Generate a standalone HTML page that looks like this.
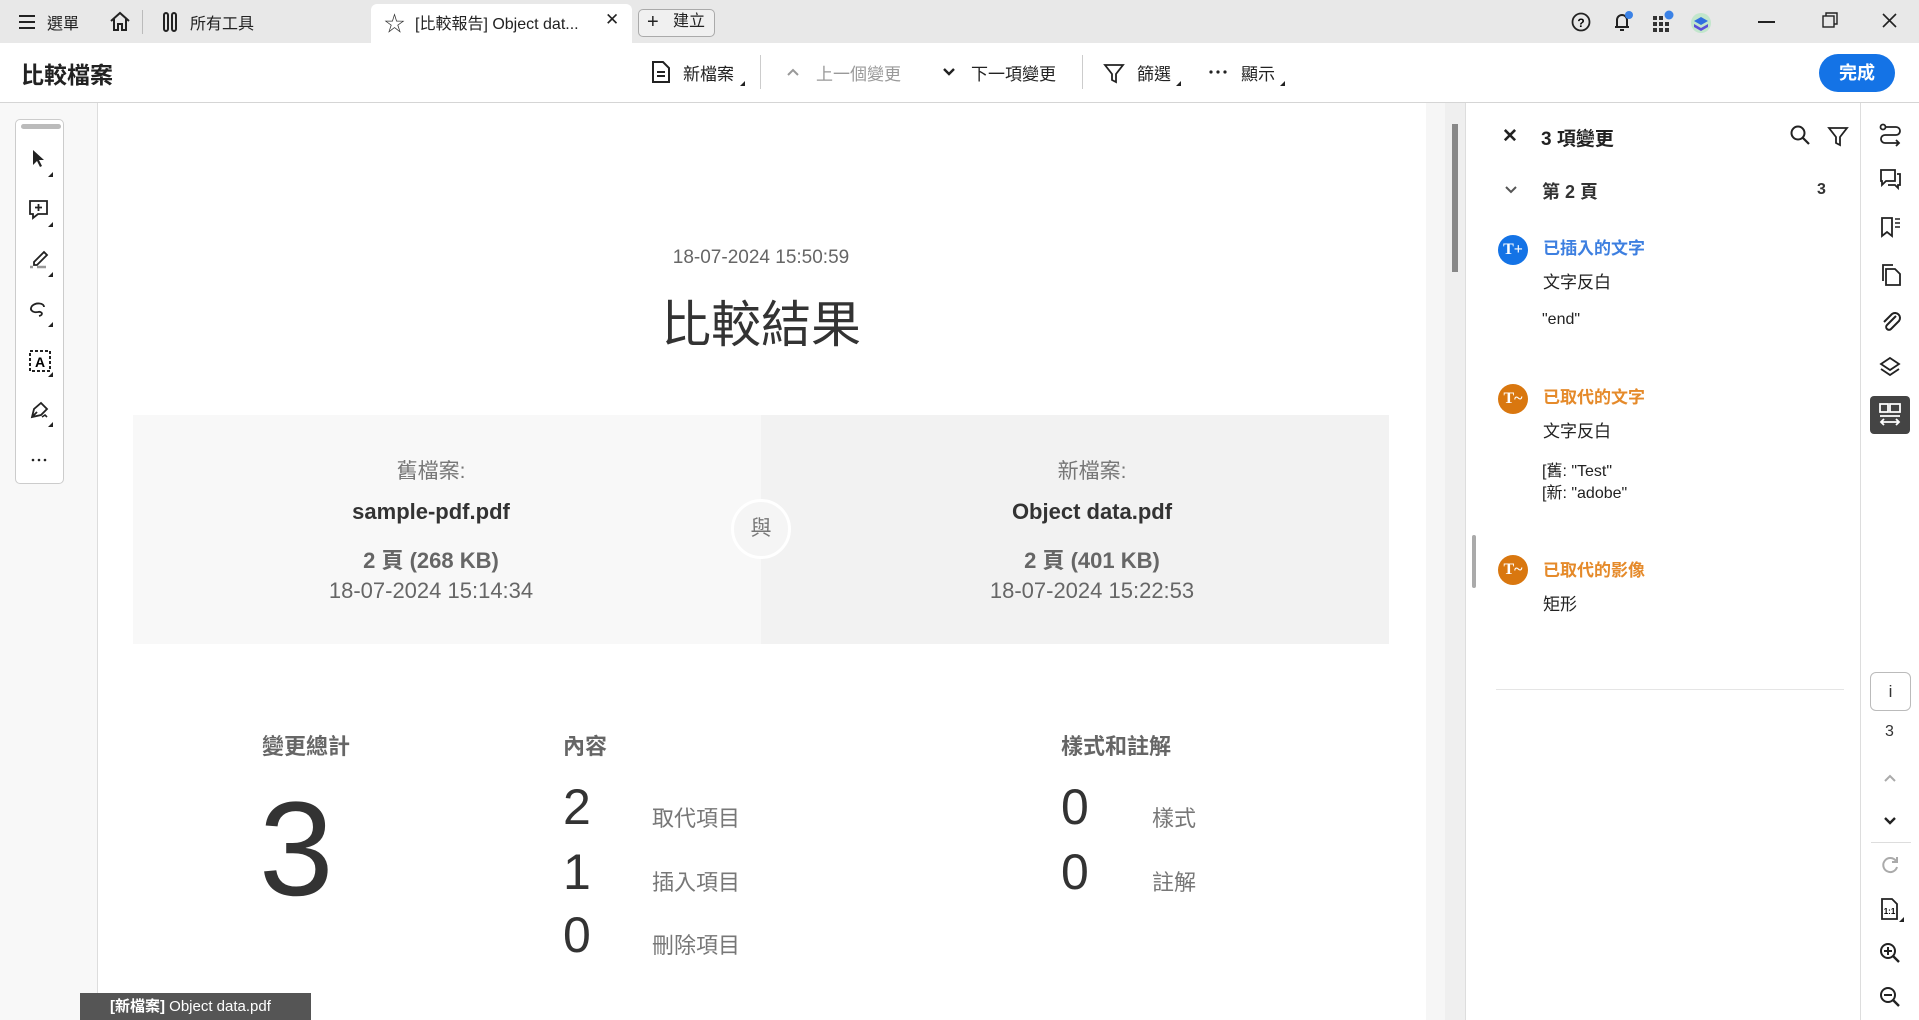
<!DOCTYPE html>
<html><head><meta charset="utf-8"><style>
*{margin:0;padding:0;box-sizing:border-box}
body{width:1919px;height:1020px;overflow:hidden;position:relative;background:#fff;font-family:"Liberation Sans","Noto Sans CJK TC",sans-serif;color:#222}
.a{position:absolute;white-space:nowrap}
svg{position:absolute;overflow:visible}
.c{transform:translateX(-50%);text-align:center}
</style></head><body>
<!-- top bar -->
<div class="a" style="left:0;top:0;width:1919px;height:43px;background:#e8e8e8"></div>
<svg style="left:19px;top:15px" width="16" height="14"><path d="M0 1H16M0 7H16M0 13H16" stroke="#222" stroke-width="2"/></svg>
<div class="a" style="left:47px;top:10px;font-size:16px">選單</div>
<svg style="left:109px;top:11px" width="22" height="20"><path d="M2 10L11 2L20 10M5 8V19H9V13H13V19H17V8" stroke="#222" stroke-width="2" fill="none"/></svg>
<div class="a" style="left:142px;top:10px;width:1px;height:24px;background:#bbb"></div>
<svg style="left:163px;top:12px" width="14" height="20"><rect x="1" y="1" width="4" height="18" rx="2" stroke="#222" stroke-width="2" fill="none"/><rect x="9" y="1" width="4" height="18" rx="2" stroke="#222" stroke-width="2" fill="none"/></svg>
<div class="a" style="left:190px;top:10px;font-size:16px">所有工具</div>
<div class="a" style="left:371px;top:4px;width:261px;height:40px;background:#fff;border-radius:6px 6px 0 0"></div>
<div class="a" style="left:384px;top:8px;font-size:21px;color:#333">☆</div>
<div class="a" style="left:415px;top:10px;font-size:16px">[比較報告] Object dat...</div>
<div class="a" style="left:605px;top:10px;font-size:17px">✕</div>
<div class="a" style="left:638px;top:9px;width:77px;height:28px;border:1px solid #aaa;border-radius:5px;background:#f0f0f0"></div>
<div class="a" style="left:647px;top:10px;font-size:20px;line-height:24px">+</div>
<div class="a" style="left:673px;top:12px;font-size:16px;line-height:20px">建立</div>
<svg style="left:1571px;top:12px" width="20" height="20"><circle cx="10" cy="10" r="8.5" stroke="#222" stroke-width="1.8" fill="none"/><text x="10" y="15" font-size="12" font-weight="bold" text-anchor="middle" font-family="Liberation Sans">?</text></svg>
<svg style="left:1611px;top:10px" width="24" height="24"><path d="M4 17H18M6 17V10A5 5 0 0 1 16 10V17M9 20H13" stroke="#222" stroke-width="2" fill="none"/><circle cx="18" cy="5" r="4" fill="#3b82e6"/></svg>
<svg style="left:1651px;top:10px" width="24" height="24"><g fill="#333"><rect x="2" y="6" width="4" height="4"/><rect x="8" y="6" width="4" height="4"/><rect x="2" y="12" width="4" height="4"/><rect x="8" y="12" width="4" height="4"/><rect x="14" y="12" width="4" height="4"/><rect x="2" y="18" width="4" height="4"/><rect x="8" y="18" width="4" height="4"/><rect x="14" y="18" width="4" height="4"/></g><circle cx="18" cy="5" r="4.5" fill="#3b82e6"/></svg>
<svg style="left:1690px;top:12px" width="22" height="22"><circle cx="11" cy="11" r="10" fill="#9be3b0" opacity=".5"/><path d="M4 9L11 5L18 9L11 13Z" fill="#2f6fe0"/><path d="M4 12L11 16L18 12V15L11 19L4 15Z" fill="#5a4fd8"/></svg>
<div class="a" style="left:1758px;top:21px;width:17px;height:2px;background:#222"></div>
<svg style="left:1822px;top:12px" width="16" height="16"><rect x="1" y="4" width="11" height="11" stroke="#222" stroke-width="1.4" fill="none"/><path d="M4 4V1H15V12H12" stroke="#222" stroke-width="1.4" fill="none"/></svg>
<svg style="left:1882px;top:13px" width="15" height="15"><path d="M1 1L14 14M14 1L1 14" stroke="#222" stroke-width="1.6"/></svg>
<!-- toolbar -->
<div class="a" style="left:0;top:102px;width:1919px;height:1px;background:#d5d5d5"></div>
<div class="a" style="left:21px;top:56px;font-size:23px;font-weight:bold">比較檔案</div>
<svg style="left:652px;top:61px" width="18" height="22"><path d="M1 1H11L17 7V21H1Z" stroke="#222" stroke-width="2" fill="none"/><path d="M5 11H13M5 15H13" stroke="#222" stroke-width="2"/></svg>
<div class="a" style="left:683px;top:60px;font-size:17px">新檔案</div>
<svg style="left:740px;top:81px" width="5" height="5"><path d="M5 0V5H0Z" fill="#222"/></svg>
<div class="a" style="left:760px;top:55px;width:1px;height:34px;background:#ccc"></div>
<svg style="left:787px;top:68px" width="12" height="8"><path d="M1 7L6 2L11 7" stroke="#999" stroke-width="2" fill="none"/></svg>
<div class="a" style="left:816px;top:60px;font-size:17px;color:#999">上一個變更</div>
<svg style="left:943px;top:68px" width="12" height="8"><path d="M1 1L6 6L11 1" stroke="#222" stroke-width="2.4" fill="none"/></svg>
<div class="a" style="left:971px;top:60px;font-size:17px">下一項變更</div>
<div class="a" style="left:1082px;top:55px;width:1px;height:34px;background:#ccc"></div>
<svg style="left:1104px;top:64px" width="20" height="19"><path d="M1 1H19L12 10V18L8 16V10Z" stroke="#222" stroke-width="1.8" fill="none"/></svg>
<div class="a" style="left:1137px;top:60px;font-size:17px">篩選</div>
<svg style="left:1176px;top:81px" width="5" height="5"><path d="M5 0V5H0Z" fill="#222"/></svg>
<svg style="left:1209px;top:70px" width="20" height="4"><g fill="#222"><circle cx="2" cy="2" r="1.6"/><circle cx="9" cy="2" r="1.6"/><circle cx="16" cy="2" r="1.6"/></g></svg>
<div class="a" style="left:1241px;top:60px;font-size:17px">顯示</div>
<svg style="left:1280px;top:81px" width="5" height="5"><path d="M5 0V5H0Z" fill="#222"/></svg>
<div class="a" style="left:1819px;top:54px;width:76px;height:38px;background:#1473e6;border-radius:19px;color:#fff;font-size:18px;font-weight:bold;text-align:center;line-height:38px">完成</div>
<!-- left gutter -->
<div class="a" style="left:0;top:103px;width:98px;height:917px;background:#f8f8f8;border-right:1px solid #ddd"></div>
<div class="a" style="left:15px;top:119px;width:49px;height:365px;background:#fff;border:1px solid #ccc;border-radius:5px"></div>
<div class="a" style="left:21px;top:124px;width:40px;height:5px;background:#bbb;border-radius:3px"></div>
<svg style="left:30px;top:149px" width="20" height="20"><path d="M3 1L3 16L7 12L10 18L12 17L9 11H14Z" fill="#222"/></svg>
<svg style="left:28px;top:199px" width="26" height="24"><path d="M2 2H19V15H10L5 19V15H2Z" stroke="#222" stroke-width="1.8" fill="none"/><path d="M10.5 5V12M7 8.5H14" stroke="#222" stroke-width="1.8"/></svg>
<svg style="left:28px;top:248px" width="26" height="24"><path d="M6 14L16 4L19 7L9 17H6Z" stroke="#222" stroke-width="1.8" fill="none"/><path d="M2 19H5M9 19H18" stroke="#999" stroke-width="2.4"/></svg>
<svg style="left:28px;top:299px" width="26" height="24"><path d="M16 8C16 4 8 3 4 7C1 11 5 14 10 13C14 12 16 16 11 17" stroke="#222" stroke-width="1.8" fill="none"/></svg>
<svg style="left:28px;top:349px" width="26" height="24"><rect x="2" y="2" width="20" height="20" stroke="#222" stroke-width="2" stroke-dasharray="3 2" fill="none"/><text x="12" y="18" font-size="14" font-weight="bold" text-anchor="middle" font-family="Liberation Sans">A</text></svg>
<svg style="left:28px;top:399px" width="26" height="24"><path d="M4 18L6 10L13 4L19 10L13 16Z M4 18L9 13" stroke="#222" stroke-width="1.8" fill="none"/><path d="M14 18L17 16L19 18" stroke="#222" stroke-width="1.6" fill="none"/></svg>
<svg style="left:31px;top:458px" width="16" height="4"><g fill="#222"><circle cx="2" cy="2" r="1.3"/><circle cx="8" cy="2" r="1.3"/><circle cx="14" cy="2" r="1.3"/></g></svg>
<svg style="left:48px;top:172px" width="6" height="300"><g fill="#222"><path d="M5 0V5H0Z"/><path d="M5 50V55H0Z"/><path d="M5 100V105H0Z"/><path d="M5 150V155H0Z"/><path d="M5 200V205H0Z"/><path d="M5 250V255H0Z"/></g></svg>
<!-- page -->
<div class="a" style="left:99px;top:103px;width:1327px;height:917px;background:#fff"></div>
<div class="a" style="left:1426px;top:103px;width:40px;height:917px;background:#f6f6f6"></div>
<div class="a" style="left:1445px;top:103px;width:20px;height:917px;background:#efefef"></div>
<div class="a" style="left:1452px;top:124px;width:6px;height:148px;background:#888"></div>
<div class="a c" style="left:761px;top:247px;font-size:19px;color:#666">18-07-2024 15:50:59</div>
<div class="a c" style="left:761px;top:285px;font-size:50px;color:#333">比較結果</div>
<div class="a" style="left:133px;top:415px;width:628px;height:229px;background:#f8f8f8"></div>
<div class="a" style="left:761px;top:415px;width:628px;height:229px;background:#f2f2f2"></div>
<div class="a" style="left:731px;top:499px;width:60px;height:60px;border-radius:50%;background:#f5f5f5;border:3px solid #fff;font-size:21px;color:#777;text-align:center;line-height:54px">與</div>
<div class="a c" style="left:431px;top:455px;font-size:21px;color:#777">舊檔案:</div>
<div class="a c" style="left:431px;top:499px;font-size:22px;font-weight:bold;color:#333">sample-pdf.pdf</div>
<div class="a c" style="left:431px;top:543px;font-size:22px;font-weight:bold;color:#666">2 頁 (268 KB)</div>
<div class="a c" style="left:431px;top:578px;font-size:22px;color:#666">18-07-2024 15:14:34</div>
<div class="a c" style="left:1092px;top:455px;font-size:21px;color:#777">新檔案:</div>
<div class="a c" style="left:1092px;top:499px;font-size:22px;font-weight:bold;color:#333">Object data.pdf</div>
<div class="a c" style="left:1092px;top:543px;font-size:22px;font-weight:bold;color:#666">2 頁 (401 KB)</div>
<div class="a c" style="left:1092px;top:578px;font-size:22px;color:#666">18-07-2024 15:22:53</div>
<div class="a" style="left:262px;top:729px;font-size:22px;font-weight:bold;color:#666">變更總計</div>
<div class="a" style="left:259px;top:783px;font-size:134px;color:#333;line-height:1">3</div>
<div class="a" style="left:563px;top:729px;font-size:22px;font-weight:bold;color:#666">內容</div>
<div class="a" style="left:563px;top:782px;font-size:50px;color:#333;line-height:1">2</div>
<div class="a" style="left:563px;top:847px;font-size:50px;color:#333;line-height:1">1</div>
<div class="a" style="left:563px;top:910px;font-size:50px;color:#333;line-height:1">0</div>
<div class="a" style="left:652px;top:801px;font-size:22px;color:#777">取代項目</div>
<div class="a" style="left:652px;top:865px;font-size:22px;color:#777">插入項目</div>
<div class="a" style="left:652px;top:928px;font-size:22px;color:#777">刪除項目</div>
<div class="a" style="left:1061px;top:729px;font-size:22px;font-weight:bold;color:#666">樣式和註解</div>
<div class="a" style="left:1061px;top:782px;font-size:50px;color:#333;line-height:1">0</div>
<div class="a" style="left:1061px;top:847px;font-size:50px;color:#333;line-height:1">0</div>
<div class="a" style="left:1152px;top:801px;font-size:22px;color:#777">樣式</div>
<div class="a" style="left:1152px;top:865px;font-size:22px;color:#777">註解</div>
<div class="a" style="left:80px;top:993px;width:231px;height:27px;background:#555;color:#fff;font-size:15px;line-height:27px;padding-left:30px"><b>[新檔案]</b> Object data.pdf</div>
<!-- right panel -->
<div class="a" style="left:1465px;top:103px;width:1px;height:917px;background:#ddd"></div>
<div class="a" style="left:1860px;top:103px;width:1px;height:917px;background:#ddd"></div>
<div class="a" style="left:1502px;top:125px;font-size:19px;font-weight:bold">✕</div>
<div class="a" style="left:1541px;top:124px;font-size:19px;font-weight:bold">3 項變更</div>
<svg style="left:1790px;top:125px" width="20" height="20"><circle cx="8" cy="8" r="6.5" stroke="#222" stroke-width="2" fill="none"/><path d="M13 13L19 19" stroke="#222" stroke-width="2.2"/></svg>
<svg style="left:1828px;top:127px" width="20" height="19"><path d="M1 1H19L12 10V18L8 16V10Z" stroke="#222" stroke-width="1.8" fill="none"/></svg>
<svg style="left:1505px;top:186px" width="12" height="8"><path d="M1 1L6 6L11 1" stroke="#555" stroke-width="2" fill="none"/></svg>
<div class="a" style="left:1542px;top:178px;font-size:18px;font-weight:bold;color:#333">第 2 頁</div>
<div class="a" style="left:1817px;top:181px;font-size:16px;font-weight:bold;color:#333">3</div>
<div class="a" style="left:1498px;top:235px;width:30px;height:30px;border-radius:50%;background:#1473e6;color:#fff;font-size:16px;font-weight:bold;text-align:center;line-height:30px;font-family:'Liberation Serif',serif">T+</div>
<div class="a" style="left:1543px;top:234px;font-size:17px;font-weight:bold;color:#3d7fe0">已插入的文字</div>
<div class="a" style="left:1543px;top:268px;font-size:17px">文字反白</div>
<div class="a" style="left:1542px;top:311px;font-size:16px">"end"</div>
<div class="a" style="left:1498px;top:384px;width:30px;height:30px;border-radius:50%;background:#d9770f;color:#fff;font-size:16px;font-weight:bold;text-align:center;line-height:30px;font-family:'Liberation Serif',serif">T~</div>
<div class="a" style="left:1543px;top:383px;font-size:17px;font-weight:bold;color:#e58a2a">已取代的文字</div>
<div class="a" style="left:1543px;top:417px;font-size:17px">文字反白</div>
<div class="a" style="left:1542px;top:461px;font-size:16px;line-height:22px">[舊: "Test"<br>[新: "adobe"</div>
<div class="a" style="left:1498px;top:555px;width:30px;height:30px;border-radius:50%;background:#d9770f;color:#fff;font-size:16px;font-weight:bold;text-align:center;line-height:30px;font-family:'Liberation Serif',serif">T~</div>
<div class="a" style="left:1543px;top:556px;font-size:17px;font-weight:bold;color:#e58a2a">已取代的影像</div>
<div class="a" style="left:1543px;top:590px;font-size:17px">矩形</div>
<div class="a" style="left:1472px;top:535px;width:4px;height:53px;background:#aaa;border-radius:2px"></div>
<div class="a" style="left:1496px;top:689px;width:348px;height:1px;background:#e5e5e5"></div>
<!-- right icon rail -->
<svg style="left:1879px;top:123px" width="24" height="24"><circle cx="4" cy="4" r="2.5" stroke="#222" stroke-width="1.8" fill="none"/><path d="M7 4H17A4 4 0 0 1 17 12H6A4 4 0 0 0 6 20H20M17 17L20 20L17 23" stroke="#222" stroke-width="1.8" fill="none"/></svg>
<svg style="left:1879px;top:168px" width="24" height="24"><path d="M2 2H16V13H7L3 17V13H2Z" stroke="#222" stroke-width="1.8" fill="none"/><path d="M18 6H21V17H19V20L16 17H9" stroke="#222" stroke-width="1.8" fill="none"/></svg>
<svg style="left:1880px;top:216px" width="24" height="24"><path d="M2 2H12V20L7 16L2 20Z" stroke="#222" stroke-width="1.8" fill="none"/><path d="M15 3H20M15 7H20M15 11H20" stroke="#222" stroke-width="1.6"/></svg>
<svg style="left:1880px;top:263px" width="24" height="24"><path d="M6 6H15L20 11V22H6Z" stroke="#222" stroke-width="1.8" fill="none"/><path d="M3 18V2H13" stroke="#222" stroke-width="1.8" fill="none"/></svg>
<svg style="left:1880px;top:310px" width="24" height="24"><path d="M16 6L7 15A2.5 2.5 0 0 0 11 19L19 11A5 5 0 0 0 12 4L4 12" stroke="#222" stroke-width="2" fill="none"/></svg>
<svg style="left:1879px;top:356px" width="24" height="24"><path d="M11 2L20 8L11 14L2 8Z" stroke="#222" stroke-width="1.8" fill="none"/><path d="M2 13L11 19L20 13" stroke="#222" stroke-width="1.8" fill="none"/></svg>
<div class="a" style="left:1870px;top:396px;width:40px;height:38px;background:#444;border-radius:4px"></div>
<svg style="left:1878px;top:402px" width="24" height="26"><path d="M2 2H10V10H2ZM12 2H22V10H12Z M2 14H22" stroke="#fff" stroke-width="1.8" fill="none"/><path d="M3 20H21M6 17L3 20L6 23M18 17L21 20L18 23" stroke="#fff" stroke-width="1.8" fill="none"/></svg>
<div class="a" style="left:1870px;top:672px;width:41px;height:39px;border:1px solid #bbb;border-radius:6px;text-align:center;line-height:37px;font-size:17px;color:#333">i</div>
<div class="a" style="left:1885px;top:723px;font-size:16px;color:#333">3</div>
<svg style="left:1884px;top:774px" width="12" height="8"><path d="M1 7L6 2L11 7" stroke="#aaa" stroke-width="2" fill="none"/></svg>
<svg style="left:1884px;top:817px" width="12" height="8"><path d="M1 1L6 6L11 1" stroke="#222" stroke-width="2.4" fill="none"/></svg>
<div class="a" style="left:1871px;top:842px;width:40px;height:1px;background:#ddd"></div>
<svg style="left:1880px;top:855px" width="20" height="20"><path d="M16 6A7 7 0 1 0 17 12M17 2V7H12" stroke="#aaa" stroke-width="2" fill="none"/></svg>
<svg style="left:1880px;top:898px" width="24" height="24"><path d="M2 1H12L17 6V21H2Z" stroke="#222" stroke-width="1.8" fill="none"/><text x="9.5" y="16" font-size="8" font-weight="bold" text-anchor="middle" font-family="Liberation Sans">1:1</text><path d="M24 19V24H19Z" fill="#222"/></svg>
<svg style="left:1879px;top:942px" width="22" height="22"><circle cx="9" cy="9" r="7" stroke="#222" stroke-width="2" fill="none"/><path d="M14 14L20 20" stroke="#222" stroke-width="2.4"/><path d="M9 5V13M5 9H13" stroke="#222" stroke-width="2"/></svg>
<svg style="left:1879px;top:986px" width="22" height="22"><circle cx="9" cy="9" r="7" stroke="#222" stroke-width="2" fill="none"/><path d="M14 14L20 20" stroke="#222" stroke-width="2.4"/><path d="M5 9H13" stroke="#222" stroke-width="2"/></svg>
</body></html>
